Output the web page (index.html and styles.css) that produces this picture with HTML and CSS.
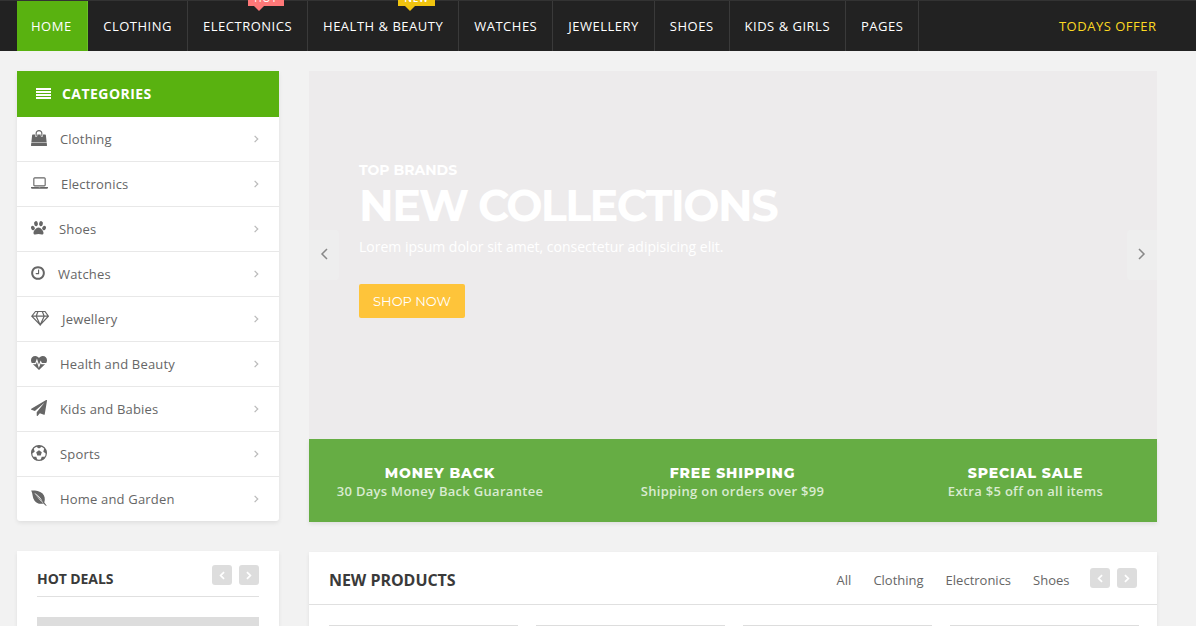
FILE: index.html
```
<!DOCTYPE html>
<html lang="en">
<head>
<meta charset="utf-8">
<title>Shop</title>
<link rel="stylesheet" href="styles.css">
</head>
<body>
<svg class="defs" width="0" height="0">
  <symbol id="left" viewBox="0 0 10 16"><path d="M8 3 3 8l5 5" fill="none" stroke="currentColor"/></symbol>
  <symbol id="right" viewBox="0 0 10 16"><path d="m2 3 5 5-5 5" fill="none" stroke="currentColor"/></symbol>
</svg>
<nav class="nav">
  <ul class="menu">
    <li class="item active">HOME</li>
    <li class="item">CLOTHING</li>
    <li class="item">ELECTRONICS<span class="tag hot">HOT</span></li>
    <li class="item">HEALTH &amp; BEAUTY<span class="tag new">NEW</span></li>
    <li class="item">WATCHES</li>
    <li class="item">JEWELLERY</li>
    <li class="item">SHOES</li>
    <li class="item">KIDS &amp; GIRLS</li>
    <li class="item">PAGES</li>
  </ul>
  <a class="offer">TODAYS OFFER</a>
</nav>
<main class="page">
  <aside class="side">
    <section class="cats">
      <h2 class="cats-head"><svg width="15" height="12" viewBox="0 0 15 12"><path d="M0 1h15M0 4h15M0 7h15M0 10h15" stroke="#fff" stroke-width="2"/></svg>CATEGORIES</h2>
      <ul class="cat-list">
        <li class="cat"><svg class="ico" width="16" height="16" viewBox="0 0 1792 1792"><path d="M1757 1408l35 313q3 28-16 50-19 21-48 21h-1664q-29 0-48-21-19-22-16-50l35-313h1722zm-93-839l86 775h-1708l86-775q5-24 23-40.500t41-16.500h256v128q0 53 37.500 90.500t90.500 37.500 90.500-37.500 37.500-90.500v-128h384v128q0 53 37.500 90.500t90.500 37.500 90.500-37.500 37.500-90.500v-128h256q24 0 41 16.500t23 40.500zm-384-185v256q0 26-19 45t-45 19-45-19-19-45v-256q0-106-75-181t-181-75-181 75-75 181v256q0 26-19 45t-45 19-45-19-19-45v-256q0-159 112.500-271.500t271.500-112.500 271.500 112.500 112.500 271.500z"/></svg>Clothing<svg class="chev"><use href="#right"/></svg></li>
        <li class="cat"><svg class="ico" width="17" height="16" viewBox="0 0 1920 1792"><path d="M416 1280q-66 0-113-47t-47-113v-704q0-66 47-113t113-47h1088q66 0 113 47t47 113v704q0 66-47 113t-113 47h-1088zm-32-864v704q0 13 9.500 22.500t22.500 9.500h1088q13 0 22.500-9.500t9.500-22.500v-704q0-13-9.500-22.500t-22.500-9.500h-1088q-13 0-22.500 9.500t-9.500 22.500zm1376 928h160v96q0 40-47 68t-113 28h-1600q-66 0-113-28t-47-68v-96h1760zm-720 96q16 0 16-16t-16-16h-160q-16 0-16 16t16 16h160z"/></svg>Electronics<svg class="chev"><use href="#right"/></svg></li>
        <li class="cat"><svg class="ico" width="15" height="16" viewBox="0 0 15 16"><ellipse cx="5" cy="3.700" rx="1.900" ry="2.600" transform="rotate(-12 5 3.700)"/><ellipse cx="10" cy="3.700" rx="1.900" ry="2.600" transform="rotate(12 10 3.700)"/><ellipse cx="1.900" cy="8" rx="1.800" ry="2.300" transform="rotate(-25 1.900 8)"/><ellipse cx="13.100" cy="8" rx="1.800" ry="2.300" transform="rotate(25 13.100 8)"/><path d="M7.500 7.600c2.300 0 5 3.300 5 5.300 0 2.700-3 1.200-5 1.200s-5 1.500-5-1.200c0-2 2.700-5.300 5-5.300z"/></svg>Shoes<svg class="chev"><use href="#right"/></svg></li>
        <li class="cat"><svg class="ico" width="14" height="16" viewBox="128 0 1536 1792"><path d="M1024 544v448q0 14-9 23t-23 9h-320q-14 0-23-9t-9-23v-64q0-14 9-23t23-9h224v-352q0-14 9-23t23-9h64q14 0 23 9t9 23zm416 352q0-148-73-273t-198-198-273-73-273 73-198 198-73 273 73 273 198 198 273 73 273-73 198-198 73-273zm224 0q0 209-103 385.500t-279.500 279.500-385.500 103-385.500-103-279.500-279.500-103-385.500 103-385.500 279.500-279.500 385.500-103 385.500 103 279.500 279.500 103 385.500z"/></svg>Watches<svg class="chev"><use href="#right"/></svg></li>
        <li class="cat"><svg class="ico line" width="18" height="16" viewBox="0 0 18 16"><path d="M4.500 1.500h9.500l3.400 4.700L9.200 15 .8 6.200zM.8 6.200h16.600M6.900 1.500 5.200 6.200 9.200 15l4-8.800-1.900-4.700"/></svg>Jewellery<svg class="chev"><use href="#right"/></svg></li>
        <li class="cat"><svg class="ico" width="16" height="16" viewBox="0 0 16 16"><path d="M8 15 2 9.300C.6 8 0 6.700 0 5.200 0 2.700 1.700 1 4.300 1 6 1 7.300 2.200 8 3c.7-.8 2-2 3.700-2C14.300 1 16 2.700 16 5.200c0 1.500-.6 2.800-2 4.100z"/><path d="M.5 8.600h4.100l1.300-3.400 2 6.200 1.800-4.600.9 1.800h4.900" fill="none" stroke="#fff" stroke-width="1.100"/></svg>Health and Beauty<svg class="chev"><use href="#right"/></svg></li>
        <li class="cat"><svg class="ico" width="16" height="16" viewBox="0 0 1792 1792"><path d="M1764 11q33 24 27 64l-256 1536q-5 29-32 45-14 8-31 8-11 0-24-5l-453-185-242 295q-18 23-49 23-13 0-22-4-19-7-30.500-23.500t-11.500-36.500v-349l864-1059-1069 925-395-162q-37-14-40-55-2-40 32-59l1664-960q15-9 32-9 20 0 36 11z"/></svg>Kids and Babies<svg class="chev"><use href="#right"/></svg></li>
        <li class="cat"><svg class="ico" width="16" height="16" viewBox="0 0 16 16"><circle cx="8" cy="8" r="7.400" fill="none" stroke="#666" stroke-width="1.200"/><path d="m8 5.200 2.800 2-1.100 3.300H6.300L5.200 7.200zM8 3.600 4.800 1.500 8 .5l3.200 1zM12.300 6.700l1-3.700 2.100 3 .1 3.100zM10.700 11.800h3.800l-2.300 2.900-2.700.8zM5.300 11.800H1.500l2.300 2.900 2.700.8zM3.700 6.700 2.700 3 .6 6 .5 9.100z"/></svg>Sports<svg class="chev"><use href="#right"/></svg></li>
        <li class="cat"><svg class="ico" width="16" height="16" viewBox="0 0 16 16"><path d="M.2.500C4 .4 8.600.8 11.300 3.300c2.500 2.400 3.100 6 2 9.200l2.300 2.900-.5.500-2.700-2.500c-3.400 1.200-6.800 0-9-3C1.400 7.700 1.900 3.700.2.500z"/><path d="M3.200 2.700C6 6.200 8 9.800 12.300 13.200 10.500 8.700 7.700 5 3.200 2.700z" fill="#fff"/><path d="m5 4.500 6.500 7.500" stroke="#666" stroke-width=".7"/></svg>Home and Garden<svg class="chev"><use href="#right"/></svg></li>
      </ul>
    </section>
    <section class="panel deals">
      <header class="deals-head"><h3 class="deals-title">HOT DEALS</h3>
        <div class="arrows"><span class="arrow"><svg><use href="#left"/></svg></span><span class="arrow"><svg><use href="#right"/></svg></span></div></header>
      <div class="deal-img"></div>
    </section>
  </aside>
  <div class="content">
    <section class="hero">
      <div class="slide">
        <p class="kicker">TOP BRANDS</p>
        <h1 class="title">NEW COLLECTIONS</h1>
        <p class="lead">Lorem ipsum dolor sit amet, consectetur adipisicing elit.</p>
        <a class="btn">SHOP NOW</a>
        <span class="ctl prev"><svg><use href="#left"/></svg></span>
        <span class="ctl next"><svg><use href="#right"/></svg></span>
      </div>
      <div class="perks">
        <div class="perk"><h4>MONEY BACK</h4><p>30 Days Money Back Guarantee</p></div>
        <div class="perk"><h4>FREE SHIPPING</h4><p>Shipping on orders over $99</p></div>
        <div class="perk"><h4>SPECIAL SALE</h4><p>Extra $5 off on all items</p></div>
      </div>
    </section>
    <section class="panel products">
      <header class="prod-head"><h3 class="prod-title">NEW PRODUCTS</h3>
        <ul class="tabs"><li>All</li><li>Clothing</li><li>Electronics</li><li>Shoes</li></ul>
        <div class="arrows"><span class="arrow"><svg><use href="#left"/></svg></span><span class="arrow"><svg><use href="#right"/></svg></span></div></header>
      <div class="grid"><div class="card"></div><div class="card"></div><div class="card"></div><div class="card"></div></div>
    </section>
  </div>
</main>
</body>
</html>
```
FILE: styles.css
```
* { box-sizing: border-box; margin: 0; padding: 0; }
html, body { height: 626px; overflow: hidden; }
body { background: #f2f2f2; font: 13px/20px "Open Sans", sans-serif; color: #666; }
ul { list-style: none; }
.defs { position: absolute; }
.nav { height: 51px; background: #222; border-top: 1px solid #333; padding: 0 39.500px 0 17px; display: flex; justify-content: space-between; line-height: 51px; letter-spacing: .507px; font-weight: 500; }
.menu { display: flex; }
.item { position: relative; padding: 0 15px; color: #fff; border-right: 1px solid #3a3a3a; white-space: nowrap; }
.active { background: #59b210; border-color: #6abf27; padding-left: 14px; margin-right: .600px; }
.offer { color: #fdd922; }
.tag { position: absolute; top: -11px; height: 16px; font-size: 10px; line-height: 17px; text-align: center; letter-spacing: 1px; }
.tag::after { content: ""; position: absolute; top: 16px; left: 6px; border: 5px solid transparent; border-bottom: 0; }
.hot { left: 60px; width: 36px; background: #ff7878; }
.hot::after { border-top-color: #ff7878; }
.new { left: 90px; width: 37px; background: #f1c40f; letter-spacing: .5px; font-weight: 600; }
.new::after { border-top-color: #f1c40f; left: 7px; }
.page { display: grid; grid-template-columns: 262px 848px; gap: 30px; padding: 20px 0 0 17px; }
.cats, .panel, .perks { box-shadow: 0 2px 4px rgba(0,0,0,.08); }
.cats { background: #fff; border-radius: 0 0 3px 3px; }
.cats-head { height: 46px; background: #59b210; color: #fff; font-size: 14px; line-height: 46px; font-weight: 700; display: flex; align-items: center; gap: 11px; padding-left: 19px; letter-spacing: .45px; }
.cat { height: 45px; display: flex; align-items: center; padding: 0 18px 0 14px; border-bottom: 1px solid #e8e8e8; letter-spacing: .18px; }
.cat:last-child { height: 44px; border: 0; }
.ico { fill: #666; margin: -2px 12.700px 0 .300px; flex: none; }
.line { fill: none; stroke: #666; stroke-width: 1.200; }
.chev { width: 9px; height: 10px; margin-left: auto; color: #bbb; stroke-width: 2; }
.panel { background: #fff; }
.deals { height: 75px; margin-top: 30px; padding: 0 20px; }
.deals-head { height: 46px; border-bottom: 1px solid #e0e0e0; display: flex; justify-content: space-between; }
.deals-title { font-size: 14px; line-height: 55px; font-weight: 700; color: #3a3a3a; letter-spacing: -.080px; }
.deals .arrows { padding-top: 14px; }
.arrows { display: flex; gap: 7px; }
.arrow { width: 20px; height: 20px; border-radius: 3px; background: #ddd; color: #fff; display: flex; align-items: center; justify-content: center; }
.arrow svg { width: 8px; height: 11px; stroke-width: 2.500; }
.deal-img { margin-top: 20px; height: 9px; background: #ddd; }
.slide { position: relative; height: 368px; background: #edebec; padding: 88px 50px 0; color: #fff; }
.kicker, .title, .btn, .perk h4 { font-family: Montserrat, Inter, sans-serif; }
.kicker { font-size: 14px; line-height: 22px; font-weight: 700; }
.title { font-size: 43px; line-height: 50px; font-weight: 700; white-space: nowrap; letter-spacing: -1.600px; }
.lead { font-size: 14px; line-height: 20px; margin-top: 6px; font-weight: 500; }
.btn { display: block; width: 106px; height: 34px; margin-top: 27px; border-radius: 2px; background: #fec43a; text-align: center; font-size: 13px; line-height: 35px; }
.ctl { position: absolute; top: 159px; width: 30px; height: 50px; background: #eee; color: #888; display: flex; align-items: center; justify-content: center; padding-bottom: 2px; }
.ctl svg { width: 10px; height: 16px; stroke-width: 1.500; }
.prev { left: 0; border-radius: 0 4px 4px 0; }
.next { right: 0; border-radius: 4px 0 0 4px; }
.perks { height: 83px; background: #66ad44; display: grid; grid-template-columns: 262px 323px 263px; text-align: center; padding-top: 24px; }
.perk h4 { color: #fff; font-size: 14px; line-height: 20px; font-weight: 800; letter-spacing: .85px; }
.perk p { color: #d9ebd0; font-weight: 600; line-height: 16px; letter-spacing: .3px; }
.products { height: 74px; margin-top: 30px; }
.prod-head { height: 53px; border-bottom: 1px solid #e0e0e0; display: flex; padding: 0 20px; }
.prod-title { font-size: 16px; line-height: 56px; font-weight: 700; color: #3a3a3a; margin-right: auto; letter-spacing: -.050px; }
.tabs { display: flex; gap: 22px; line-height: 56px; margin-right: 20.500px; }
.products .arrows { padding-top: 16px; }
.grid { display: grid; grid-template-columns: repeat(4, 189px); gap: 18px; padding: 20px 20px 0; }
.card { height: 1px; background: #ddd; }
```
